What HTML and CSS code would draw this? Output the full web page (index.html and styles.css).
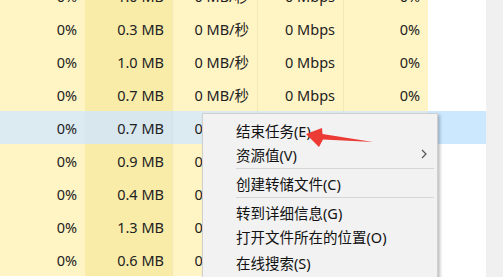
FILE: index.html
```html
<!DOCTYPE html>
<html lang="zh-CN">
<head>
<meta charset="utf-8">
<link rel="stylesheet" href="styles.css">
</head>
<body>
<div class="screen">
  <div class="table">
    <div class="row"><div class="c c1">0%</div><div class="c c2">1.0 MB</div><div class="c c3">0 MB/秒</div><div class="c c4">0 Mbps</div><div class="c c5">0%</div><div class="c c6"></div></div>
    <div class="row"><div class="c c1">0%</div><div class="c c2">0.3 MB</div><div class="c c3">0 MB/秒</div><div class="c c4">0 Mbps</div><div class="c c5">0%</div><div class="c c6"></div></div>
    <div class="row"><div class="c c1">0%</div><div class="c c2">1.0 MB</div><div class="c c3">0 MB/秒</div><div class="c c4">0 Mbps</div><div class="c c5">0%</div><div class="c c6"></div></div>
    <div class="row"><div class="c c1">0%</div><div class="c c2">0.7 MB</div><div class="c c3">0 MB/秒</div><div class="c c4">0 Mbps</div><div class="c c5">0%</div><div class="c c6"></div></div>
    <div class="row sel"><div class="c c1">0%</div><div class="c c2">0.7 MB</div><div class="c c3">0 MB/秒</div><div class="c c4">0 Mbps</div><div class="c c5">0%</div><div class="c c6"></div></div>
    <div class="row"><div class="c c1">0%</div><div class="c c2">0.9 MB</div><div class="c c3">0 MB/秒</div><div class="c c4">0 Mbps</div><div class="c c5">0%</div><div class="c c6"></div></div>
    <div class="row"><div class="c c1">0%</div><div class="c c2">0.4 MB</div><div class="c c3">0 MB/秒</div><div class="c c4">0 Mbps</div><div class="c c5">0%</div><div class="c c6"></div></div>
    <div class="row"><div class="c c1">0%</div><div class="c c2">1.3 MB</div><div class="c c3">0 MB/秒</div><div class="c c4">0 Mbps</div><div class="c c5">0%</div><div class="c c6"></div></div>
    <div class="row"><div class="c c1">0%</div><div class="c c2">0.6 MB</div><div class="c c3">0 MB/秒</div><div class="c c4">0 Mbps</div><div class="c c5">0%</div><div class="c c6"></div></div>
  </div>
  <div class="scroll"></div>

  <div class="menu">
    <div class="item">结束任务(E)</div>
    <div class="item has-sub">资源值(V)<span class="chev"><svg width="6" height="10" viewBox="0 0 6 10"><path d="M1 1 L5 5 L1 9" fill="none" stroke="#555" stroke-width="1.2"/></svg></span></div>
    <div class="sep"></div>
    <div class="item">创建转储文件(C)</div>
    <div class="sep"></div>
    <div class="item">转到详细信息(G)</div>
    <div class="item">打开文件所在的位置(O)</div>
    <div class="item tall">在线搜索(S)</div>
  </div>

  <svg class="arrow" width="80" height="30" viewBox="0 0 80 30">
    <polygon points="3,11 19,5 19.5,11 70,19 20,16.5 16,24" fill="#ec3b35"/>
  </svg>
</div>
</body>
</html>
```

FILE: styles.css
```css
html, body {
  margin: 0;
  padding: 0;
  background: #ffffff;
  overflow: hidden;
}

.screen {
  position: relative;
  width: 503px;
  height: 277px;
  overflow: hidden;
  display: flex;
  font-family: "Noto Sans", "Noto Sans CJK SC", sans-serif;
}

.table {
  width: 486px;
  margin-top: -21px;
  display: flex;
  flex-direction: column;
}

.row {
  display: grid;
  grid-template-columns: 85px 87px 85px 86px 85px 58px;
  height: 33px;
}

.c {
  display: flex;
  align-items: center;
  justify-content: flex-end;
  padding-right: 8px;
  font-size: 14.5px;
  color: #222;
  white-space: nowrap;
  overflow: hidden;
  box-sizing: border-box;
}

.c1, .c3, .c4, .c5 { background: #fff4c4; }
.c2 { background: #f9eca8; }
.c3, .c4, .c5 { border-left: 1px solid #f4e7b4; }
.c6 { background: #ffffff; }

.sel .c1, .sel .c3, .sel .c4, .sel .c5 { background: #dceaf2; }
.sel .c2 { background: #d8e6ee; }
.sel .c6 { background: #cce8ff; }
.sel .c3, .sel .c4, .sel .c5 { border-left-color: #d4e2ea; }

.scroll {
  width: 17px;
  background: #f0f0f0;
}

.menu {
  position: absolute;
  left: 202px;
  top: 113px;
  width: 236px;
  height: 180px;
  box-sizing: border-box;
  background: #f2f2f2;
  border: 1px solid #cfcfcf;
  box-shadow: 2px 2px 3px rgba(0, 0, 0, 0.25);
  padding-top: 4px;
  font-family: "Noto Sans", "Noto Sans CJK SC", sans-serif;
}

.item {
  height: 24px;
  display: flex;
  align-items: center;
  padding-left: 33px;
  font-size: 14.5px;
  color: #111;
  position: relative;
}

.item.tall {
  height: 28px;
}

.chev {
  position: absolute;
  right: 10px;
  top: 7px;
  display: flex;
}

.sep {
  height: 1px;
  background: #d6d6d6;
  margin: 2px 3px 2px 33px;
}

.arrow {
  position: absolute;
  left: 303px;
  top: 123px;
}
```
